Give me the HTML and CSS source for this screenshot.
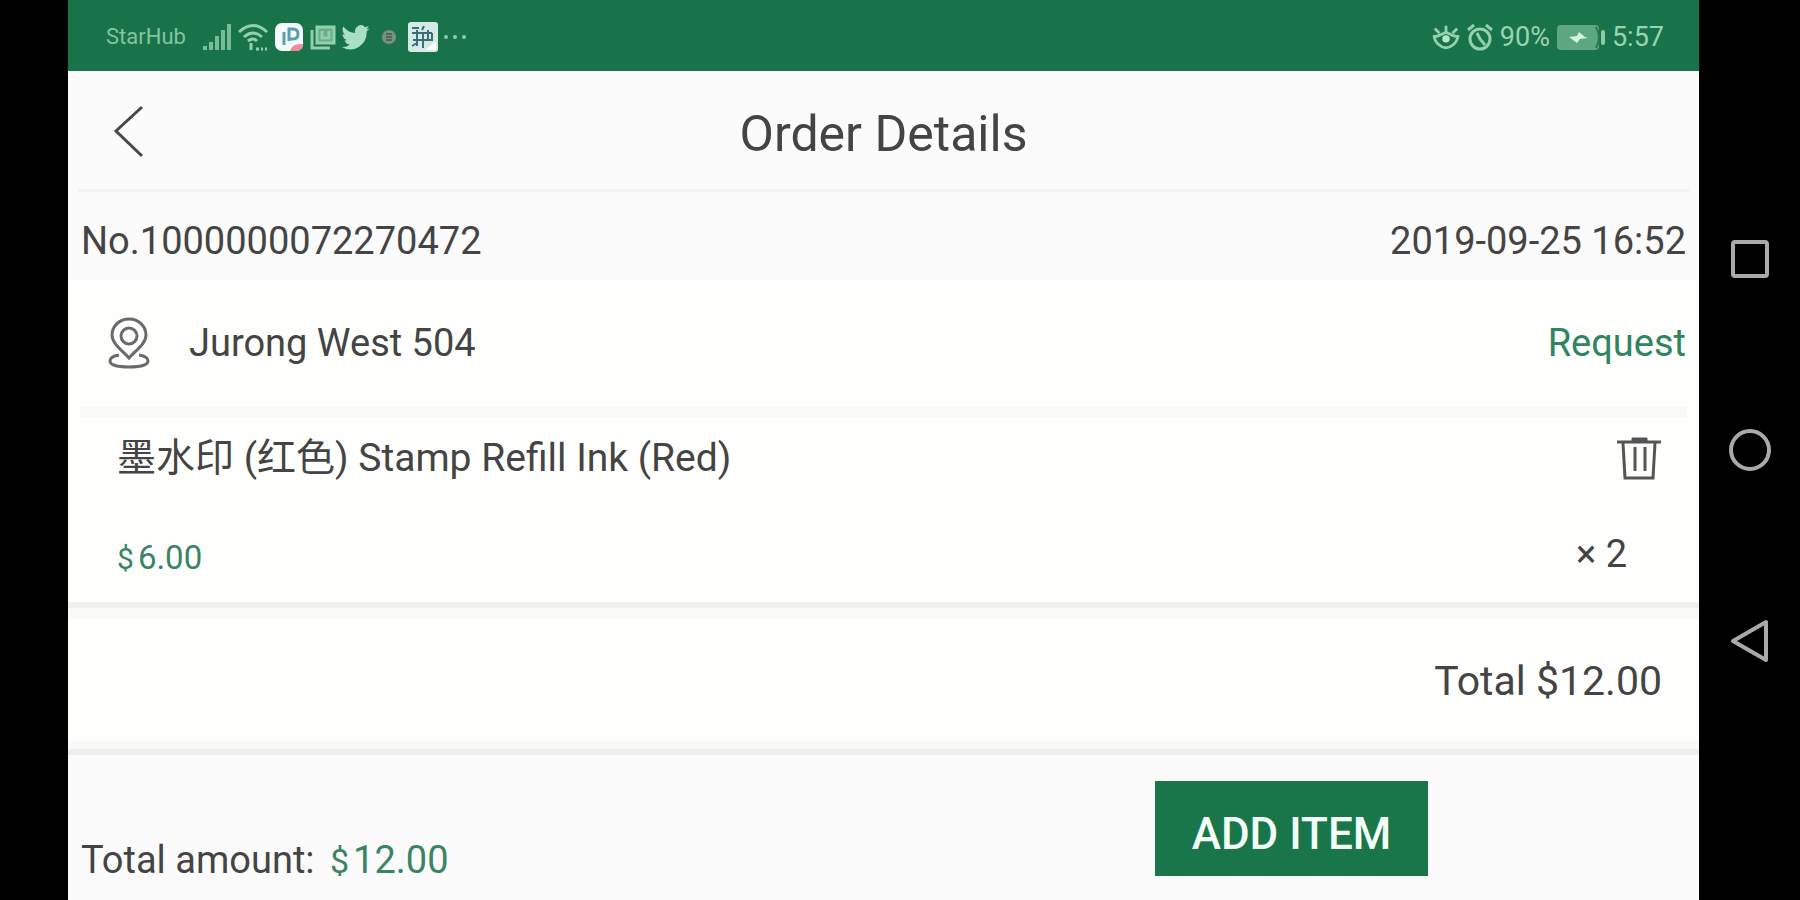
FILE: index.html
```html
<!DOCTYPE html>
<html lang="en">
<head>
<meta charset="utf-8">
<title>Order Details</title>
<link rel="stylesheet" href="styles.css">
</head>
<body>
<div class="device">
  <div class="app">
    <div class="status">
      <span class="carrier">StarHub</span>
      <div class="status-icons">
        <svg width="30" height="30" viewBox="0 0 30 30" fill="#79bd98"><path d="M1 24h4v4H1zM7 20h4v8H7zM13 14h4v14h-4zM19 8h4v20h-4zM25 2h4v26h-4z"/></svg>
        <svg width="32" height="30" viewBox="0 0 32 30" fill="none" stroke="#93d0ae" stroke-width="3"><path d="M2 10Q16-3 30 10M7 15q9-8 18 0M11 19q5-4 9 0"/><path d="M14 21v7M19 27h3M24 27h2M28 27h2" /></svg>
        <svg width="30" height="30" viewBox="0 0 30 30"><rect x="1" y="1" width="28" height="28" rx="7" fill="#f4fbfa"/><path d="M10 10v13M15 19V7h4q5 0 5 5t-5 5h-4" fill="none" stroke="#5a9db0" stroke-width="3"/><path d="M16 29q2-8 13-7 0 7-7 7z" fill="#f08b9b"/></svg>
        <svg width="28" height="30" viewBox="0 0 28 30" fill="none" stroke="#93d0ae" stroke-width="3"><path d="M3 8v18h18"/><rect x="8" y="5" width="17" height="16" fill="#69ad89"/><path d="M13 9v7h7V9"/></svg>
        <svg width="28" height="30" viewBox="0 0 24 24" preserveAspectRatio="none" fill="#a9e0c5"><path d="M23.6 4.9a9.800 9.800 0 0 1-2.800.8 4.900 4.900 0 0 0 2.100-2.700 9.900 9.900 0 0 1-3.100 1.200 4.900 4.900 0 0 0-8.400 4.500A14 14 0 0 1 1.200 3.500a4.900 4.900 0 0 0 1.500 6.600 4.900 4.900 0 0 1-2.200-.6 4.900 4.900 0 0 0 3.900 4.900 4.900 4.900 0 0 1-2.200.1 4.900 4.900 0 0 0 4.600 3.400A9.900 9.900 0 0 1 0 19.900 14 14 0 0 0 21.200 7.400a10 10 0 0 0 2.400-2.500z"/></svg>
        <svg width="28" height="30" viewBox="0 0 28 30"><circle cx="14" cy="15" r="7" fill="#7d9080"/><path d="M11 12h6M11 15h6M11 18h6" stroke="#4b695a" stroke-width="2"/></svg>
        <svg width="30" height="30" viewBox="0 0 30 30"><rect width="30" height="30" rx="3" fill="#d6ebe6"/><path d="M4 6h7M16 4l-2 4M4 11h20M5 18h20M9 8v16M15 11v15M20 8v9M24 11v7M4 24l5-3" fill="none" stroke="#3b6d7d" stroke-width="2"/><path d="M17 28l11-9v9z" fill="#fff"/></svg>
        <svg width="24" height="30" viewBox="0 0 24 30" fill="#8ccbaa"><circle cx="3" cy="15" r="2"/><circle cx="12" cy="15" r="2"/><circle cx="21" cy="15" r="2"/></svg>
      </div>
      <div class="status-right">
        <svg width="28" height="30" viewBox="0 0 30 30" fill="none" stroke="#93d0ae" stroke-width="3"><path d="M2 13q1 7 5 10 8 7 16 0 4-3 5-10M2 15q6-1 13-5 7 4 13 5M15 9V3M8 11L3 6M22 11l5-5"/><circle cx="15" cy="17" r="4" fill="#b5e8cb" stroke="none"/></svg>
        <svg width="28" height="30" viewBox="0 0 28 30" fill="none" stroke="#93d0ae" stroke-width="3"><circle cx="14" cy="17" r="10"/><path d="M11 11l3 6 5 6M2 8l6-5M26 8l-6-5"/></svg>
        <span>90%</span>
        <svg class="battery" width="50" height="30" viewBox="0 0 50 30"><rect x="1" y="3" width="42" height="25" rx="4" fill="#5da783"/><path d="M40 5q6 10 0 21" fill="none" stroke="#267a51" stroke-width="2"/><rect x="45" y="8" width="4" height="15" rx="2" fill="#8ccbaa"/><path d="M13 15l8-1 2-4 6 5 3 1-8 1-3 4z" fill="#d2f5df"/></svg>
        <span>5:57</span>
      </div>
    </div>

    <header class="header">
      <button class="icon-button" aria-label="Back"><svg width="32" height="54" viewBox="0 0 32 54" fill="none" stroke="#484848" stroke-width="3"><path d="M29 3L3 27l26 25"/></svg></button>
      <h1 class="title">Order Details</h1>
    </header>

    <main>
      <section class="row number-row"><span>No.1000000072270472</span><time>2019-09-25 16:52</time></section>
      <section class="row place-row">
        <svg class="pin" width="42" height="52" viewBox="0 0 42 52" fill="none" stroke="#6a6a6a" stroke-width="3"><path d="M21 41C15 34 4 27 4 18a17 16 0 0 1 34 0c0 9-11 16-17 23z"/><circle cx="21" cy="19" r="8"/><path d="M11 38c-6 1-9 3-9 6 0 4 8 6 19 6s19-2 19-6c0-3-3-5-9-6"/></svg>
        <span class="place">Jurong West 504</span>
        <button class="request">Request</button>
      </section>
      <div class="thin-band"></div>
      <section class="item">
        <div class="item-line">
          <span class="item-name">墨水印 (红色) Stamp Refill Ink (Red)</span>
          <button class="icon-button" aria-label="Delete item"><svg width="44" height="46" viewBox="0 0 44 46" fill="none" stroke="#555" stroke-width="3"><path d="M0 7h44M6 8l2 35h28l2-35M18 12v24M28 12v24"/><path d="M15 3h15v4H15z" fill="#555" stroke-width="1"/></svg></button>
        </div>
        <div class="price-line">
          <span class="price"><small class="currency">$</small>6.00</span>
          <span class="quantity">× 2</span>
        </div>
      </section>
      <div class="band"></div>
      <section class="total">Total $12.00</section>
    </main>

    <footer class="footer">
      <div class="amount">Total amount: <span class="sum"><small class="currency">$</small>12.00</span></div>
      <button class="add">ADD ITEM</button>
    </footer>
  </div>

  <nav class="system-nav" aria-label="System">
    <button class="icon-button" aria-label="Recent apps"><svg width="44" height="44" viewBox="0 0 44 44" fill="none" stroke="#a9a9a9" stroke-width="4"><rect x="5" y="5" width="34" height="34" rx="2"/></svg></button>
    <button class="icon-button" aria-label="Home"><svg width="44" height="44" viewBox="0 0 44 44" fill="none" stroke="#a9a9a9" stroke-width="4"><circle cx="22" cy="22" r="19"/></svg></button>
    <button class="icon-button" aria-label="Back"><svg width="44" height="44" viewBox="0 0 44 44" fill="none" stroke="#a9a9a9" stroke-width="4" stroke-linejoin="round"><path d="M5 22L38 3v38z"/></svg></button>
  </nav>
</div>
</body>
</html>
```

FILE: styles.css
```css
* { box-sizing: border-box; }

body {
  margin: 0;
  background: #000;
  color: #444;
  font-family: Roboto, "Noto Sans CJK SC", sans-serif;
  font-size: 38px;
  line-height: 46px;
}

button {
  border: 0;
  padding: 0;
  background: none;
  color: inherit;
  font: inherit;
  cursor: pointer;
}

svg { display: block; flex: none; }

.device {
  display: flex;
  min-height: 100vh;
  padding-left: 68px;
}

.app {
  flex: 1;
  display: flex;
  flex-direction: column;
  background: #fbfbfb;
}

.status {
  display: flex;
  align-items: center;
  padding: 14px 35px 11px 38px;
  background: #19734a;
  color: #98d4b4;
}

.carrier { font-size: 22px; color: #83c4a1; }

.status-icons {
  display: flex;
  gap: 5px;
  margin-left: 16px;
}

.status-right {
  display: flex;
  align-items: center;
  gap: 6px;
  margin-left: auto;
  font-size: 27px;
}

.header {
  display: grid;
  grid-template-columns: 120px 1fr 120px;
  align-items: center;
  margin: 0 10px;
  padding: 26px 0 25px;
  border-bottom: 3px solid #f3f3f3;
}

.icon-button { display: flex; }

.header .icon-button { padding-left: 35px; }

.title {
  margin: 0;
  padding-top: 7px;
  text-align: center;
  font-size: 50px;
  font-weight: 400;
  line-height: 60px;
}

.row {
  display: flex;
  justify-content: space-between;
  align-items: center;
}

.number-row { padding: 26px 13px 16px; }

.place-row {
  padding: 37px 13px 38px 40px;
  background: #fefffd;
}

.place { margin-left: 39px; }

.request { margin-left: auto; color: #2f8560; }

.thin-band {
  height: 10px;
  border: solid #fefffd;
  border-width: 0 12px;
  background: #f9f9f8;
}

.item {
  padding: 18px 38px 20px 49px;
  background: #fefffd;
}

.item-line {
  display: flex;
  justify-content: space-between;
  align-items: center;
}

.item-name { font-size: 39px; }

.price-line {
  display: flex;
  justify-content: space-between;
  align-items: flex-start;
  margin-top: 54px;
  padding-right: 34px;
}

.price { font-size: 33px; color: #3a8464; }

.price .currency { font-size: 30px; }

.quantity { line-height: 38px; }

.currency { margin-right: 4px; font-size: 34px; }

.sum { margin-left: 6px; color: #3a8464; }

.band {
  height: 16px;
  border-top: 6px solid #f0f0ef;
  background: #f9f9f8;
}

.total {
  padding: 40px 37px 45px;
  border-bottom: 6px solid #eee;
  background: #fefffd;
  box-shadow: inset 0 -8px #f9f9f8;
  font-size: 41px;
  text-align: right;
}

.footer {
  display: flex;
  justify-content: space-between;
  align-items: flex-start;
  padding: 26px 16.6% 12px 13px;
}

.amount { padding-top: 56px; }

.add {
  padding: 30px 37px 19px;
  background: #19754a;
  color: #f1fff7;
  font-size: 44px;
  font-weight: 500;
}

.system-nav {
  display: flex;
  flex-direction: column;
  align-items: center;
  justify-content: center;
  gap: 147px;
  width: 101px;
}
```
